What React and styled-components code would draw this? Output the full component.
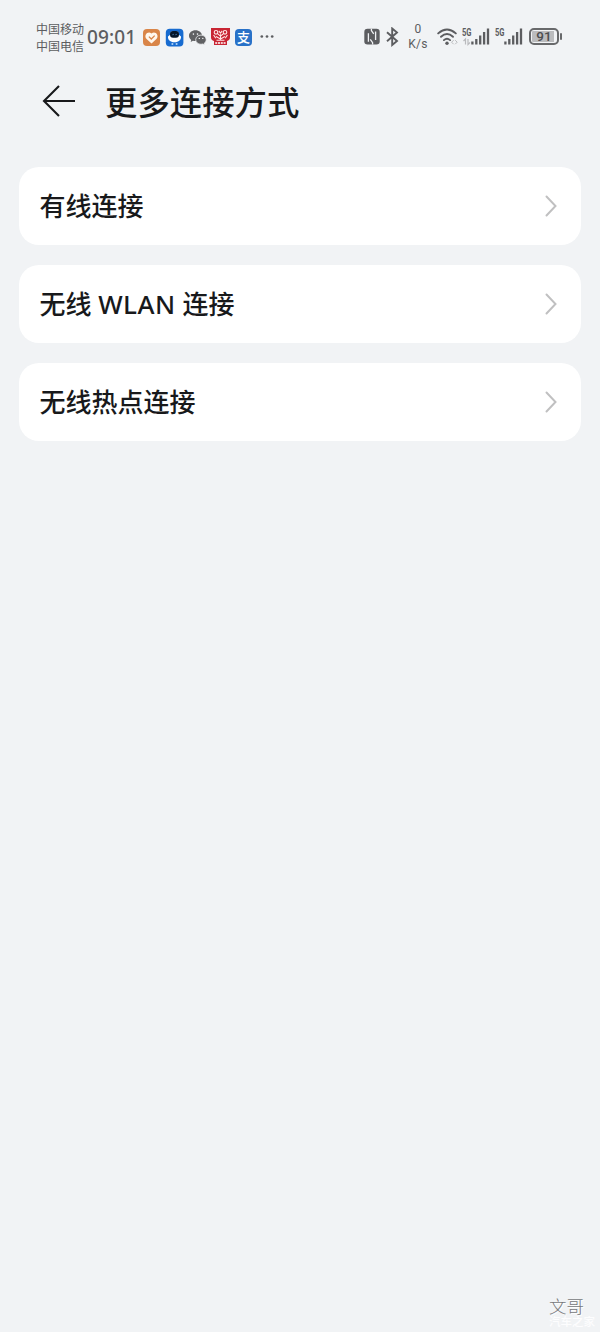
import styled, { createGlobalStyle } from "styled-components";

const GlobalStyle = createGlobalStyle`
    * {
        box-sizing: border-box;
    }

    body {
        margin: 0;
        background-color: #f1f3f5;
        font-family: "Noto Sans CJK SC", sans-serif;
        color: #18191b;
    }
`

const Page = styled.div`
    width: 100%;
    min-height: 1332px;
    display: flex;
    flex-direction: column;
`

const StatusBar = styled.div`
    height: 74px;
    padding: 0 38px 0 36px;
    display: flex;
    justify-content: space-between;
    align-items: center;
    color: #5c5d60;
`

const StatusGroup = styled.div`
    height: 36px;
    display: flex;
    align-items: center;
`

const Carriers = styled.div`
    width: 48px;
    margin-top: -1px;
    font-size: 12px;
    line-height: 17px;
    white-space: nowrap;
`

const Clock = styled.div`
    width: 49px;
    margin-left: 3px;
    font-family: "Noto Sans", sans-serif;
    font-size: 19px;
    font-weight: 500;
    line-height: 24px;
    letter-spacing: 0.1px;
`

const AppIcons = styled.div`
    margin-left: 6px;
    display: flex;
    align-items: center;
    gap: 4px;
`

const AppIcon = styled.svg`
    width: 19px;
    height: 19px;
    flex-shrink: 0;
`

const PayIcon = styled.div`
    width: 17px;
    height: 17px;
    margin: 0 1px;
    border-radius: 4px;
    background-color: #2871c8;
    color: white;
    font-size: 13px;
    font-weight: 500;
    line-height: 16px;
    text-align: center;
`

const Glyph = styled.svg`
    width: ${(props) => props.$w}px;
    height: 20px;
    margin-left: ${(props) => props.$gap || 0}px;
    flex-shrink: 0;
`

const NetSpeed = styled.div`
    width: 22px;
    margin-left: 8px;
    margin-right: 1px;
    font-family: "Roboto", sans-serif;
    font-size: 12px;
    line-height: 15px;
    letter-spacing: 0.3px;
    text-align: center;
    white-space: nowrap;
`

const NetType = styled.div`
    width: 9px;
    height: 20px;
    margin-left: ${(props) => props.$gap}px;
    font-family: "Roboto", sans-serif;
    font-size: 10px;
    font-weight: 700;
    line-height: 11px;
    white-space: nowrap;
    transform: scaleX(0.76);
    transform-origin: left;
`

const Battery = styled.div`
    position: relative;
    width: 30px;
    height: 17px;
    margin-left: 6px;
    margin-right: 3px;
    margin-top: -1px;
    padding: 1px;
    border: 2px solid #68696b;
    border-radius: 5px;

    &::after {
        content: "";
        position: absolute;
        right: -5px;
        top: 3px;
        width: 2px;
        height: 7px;
        border-radius: 1px;
        background-color: #68696b;
    }
`

const BatteryLevel = styled.div`
    height: 11px;
    border-radius: 1px;
    background: linear-gradient(to right, #bbbcbe 91%, transparent 91%);
    color: #4d4e50;
    font-family: "Roboto", sans-serif;
    font-size: 13.5px;
    font-weight: 500;
    line-height: 11px;
    text-align: center;
`

const Header = styled.header`
    height: 92px;
    padding: 5px 42px 0;
    display: flex;
    align-items: flex-start;
`

const BackArrow = styled.svg`
    width: 34px;
    height: 34px;
    margin-top: 5px;
    flex-shrink: 0;
`

const Title = styled.h1`
    margin: 0 0 0 29px;
    font-size: 32.4px;
    font-weight: 500;
    line-height: 44px;
`

const List = styled.main`
    padding: 0.6px 19.4px;
    display: flex;
    flex-direction: column;
    gap: 20px;
`

const Item = styled.div`
    height: 78px;
    padding: 0 23px 0 20px;
    display: flex;
    align-items: center;
    justify-content: space-between;
    border-radius: 20px;
    background-color: white;
`

const ItemLabel = styled.span`
    font-family: "Noto Sans", "Noto Sans CJK SC", sans-serif;
    font-size: 26px;
    font-weight: 500;
    line-height: 38px;
`

const Latin = styled.span`
    letter-spacing: 0.5px;
`

const Chevron = styled.svg`
    width: 14px;
    height: 24px;
`

const Signature = styled.footer`
    margin-top: auto;
    height: 38px;
    padding-right: 16px;
    display: flex;
    flex-direction: column;
    align-items: flex-end;
    font-size: 17.5px;
    font-weight: 300;
    line-height: 24px;
    color: #77787b;
    text-shadow: 1px 1px 0 white;
`

const SiteName = styled.span`
    margin-top: -5px;
    margin-right: -11px;
    color: #fdfdfe;
    font-size: 11.5px;
    font-weight: 500;
    line-height: 16px;
    text-shadow: none;
`

function HeartIcon() {
    return (
        <AppIcon viewBox="0 0 19 19">
            <rect x="1" y="1" width="17" height="17" rx="4" fill="#d98548" />
            <path d="M9.5 15.6 4.6 11C1.2 7.2 6 2.2 9.5 5.4c3.5-3.2 8.3 1.8 4.9 5.6Z" fill="#fff7ed" />
            <path d="m6.9 8.6 2.4 2.4 3.4-3.4" fill="none" stroke="#d98548" strokeWidth="1.3" />
        </AppIcon>
    );
}

function RobotIcon() {
    return (
        <AppIcon viewBox="0 0 19 19">
            <rect x="0.8" y="0.8" width="17.6" height="17.6" rx="4" fill="#176bd0" />
            <path d="M3 8.4C2.6 11.4 5.2 14.2 9.5 14.2s6.9-2.8 6.5-5.8L14.2 7 13 3.4H6L4.8 7Z" fill="white" />
            <rect x="5" y="3" width="9" height="6.8" rx="3" fill="#07172a" />
            <path d="M7.5 6.7q.6-1 1.2 0M10.5 6.7q.6-1 1.2 0" fill="none" stroke="#6aa7df" strokeWidth=".8" />
            <path d="M7.4 15.2v1.5M11.6 15.2v1.5" stroke="#d8edff" strokeWidth="1.7" />
        </AppIcon>
    );
}

function ChatIcon() {
    return (
        <AppIcon viewBox="0 0 19 19">
            <path d="M7.5 2.3C3.8 2.3 1 4.7 1 7.8c0 1.7.8 3.1 2.2 4.1l-.5 2 2.2-1.2c.8.3 1.7.4 2.6.4 3.6 0 6.5-2.4 6.5-5.3 0-3.1-2.9-5.5-6.5-5.5Z" fill="#606163" />
            <path d="M13 7.1c-3 0-5.3 2-5.3 4.6s2.3 4.6 5.3 4.6c.7 0 1.3-.1 1.9-.3l1.9 1-.5-1.7c1.1-.9 1.9-2.1 1.9-3.6 0-2.6-2.3-4.6-5.2-4.6Z" fill="#606163" stroke="#f1f3f5" strokeWidth=".8" />
            <g fill="#f1f3f5">
                <circle cx="5.4" cy="6.1" r=".8" />
                <circle cx="9.5" cy="6.1" r=".8" />
                <circle cx="11.3" cy="10.4" r=".7" />
                <circle cx="14.8" cy="10.4" r=".7" />
            </g>
        </AppIcon>
    );
}

function EmblemIcon() {
    return (
        <AppIcon viewBox="0 0 19 19">
            <path d="M0 0h19v9.6c0 2-1.2 3-3 3.4v4H3v-4c-1.8-.4-3-1.4-3-3.4Z" fill="#c82533" />
            <g fill="none" stroke="#ffe8e7" strokeWidth="1.1">
                <path d="M9.5 12.5V6.3M9.5 8.2 6.2 5.4M9.5 8.2l3.3-2.8M9.5 11 5 8.6M9.5 11l4.5-2.4M5.5 12.2h8" />
                <circle cx="5" cy="4.3" r="1.8" />
                <circle cx="14" cy="4.3" r="1.8" />
                <path d="M7.8 2.8 9.5 5l1.7-2.2M2.6 7l2.2 3.2M16.4 7l-2.2 3.2" />
            </g>
            <path d="M4.2 15h10.8" stroke="#fff" strokeWidth="1.5" strokeDasharray="2 .8" />
        </AppIcon>
    );
}

function DotsIcon() {
    return (
        <Glyph $w={14} $gap={3} viewBox="0 0 14 20" fill="#5c5d60">
            <circle cx="1.8" cy="9.5" r="1.35" />
            <circle cx="7" cy="9.5" r="1.35" />
            <circle cx="12.2" cy="9.5" r="1.35" />
        </Glyph>
    );
}

function NfcIcon() {
    return (
        <Glyph $w={16} viewBox="0 0 16 20">
            <rect x="0.3" y="1.8" width="15.4" height="15.6" rx="3.2" fill="#5c5d60" />
            <path d="M4.4 14.8V6.2M11.6 4.4V13M7.4 1.8v1.8l2.3 3.2M8.6 17.4v-1.8l-2.3-3.2" fill="none" stroke="#f1f3f5" strokeWidth="1.3" />
        </Glyph>
    );
}

function BluetoothIcon() {
    return (
        <Glyph $w={13} $gap={6} viewBox="0 0 13 20">
            <path d="m1 5.2 10 8.8-4.8 4V1.5l4.8 4L1 14.3" fill="none" stroke="#5c5d60" strokeWidth="1.9" />
        </Glyph>
    );
}

function WifiIcon() {
    return (
        <Glyph $w={21} $gap={7} viewBox="0 0 21 20">
            <g fill="none" stroke="#5c5d60" strokeWidth="1.9" strokeLinecap="round">
                <path d="M1.2 6.4Q10 -1.4 18.8 6.4" />
                <path d="M4 9.8q6-5.5 12 0" />
                <path d="M6.9 13.1q3.1-2.8 6.2 0" />
            </g>
            <circle cx="10" cy="16.2" r="1.7" fill="#5c5d60" />
            <path d="m16.6 13.2-2 2 2 2M18.2 13.2l2 2-2 2" fill="none" stroke="#b9babd" />
        </Glyph>
    );
}

function SignalIcon({ activity }) {
    return (
        <Glyph $w={activity ? 28 : 19} $gap={activity ? -9 : 0} viewBox={activity ? "-9 0 28 20" : "0 0 19 20"}>
            {activity && (
                <path d="M-5.5 17.5v-5.5l-2 2M-3 12v5.5l2-2" fill="none" stroke="#b9babd" strokeWidth="1.2" />
            )}
            <path d="M1.4 14.5v3M5.3 12v5.5M9.2 8.5v9M13.1 5v12.5M17 1.5v16" stroke="#5c5d60" strokeWidth="2.3" strokeLinecap="butt" />
        </Glyph>
    );
}

function ListItem({ children }) {
    return (
        <Item>
            <ItemLabel>{children}</ItemLabel>
            <Chevron viewBox="0 0 14 24">
                <path d="m2.5 2.5 9 9.5-9 9.5" fill="none" stroke="#c0c0c1" strokeWidth="2" strokeLinecap="round" />
            </Chevron>
        </Item>
    );
}

function App() {
    return (
        <Page>
            <GlobalStyle />
            <StatusBar>
                <StatusGroup>
                    <Carriers>
                        <div>中国移动</div>
                        <div>中国电信</div>
                    </Carriers>
                    <Clock>09:01</Clock>
                    <AppIcons>
                        <HeartIcon />
                        <RobotIcon />
                        <ChatIcon />
                        <EmblemIcon />
                        <PayIcon>支</PayIcon>
                        <DotsIcon />
                    </AppIcons>
                </StatusGroup>
                <StatusGroup>
                    <NfcIcon />
                    <BluetoothIcon />
                    <NetSpeed>
                        <div>0</div>
                        <div>K/s</div>
                    </NetSpeed>
                    <WifiIcon />
                    <NetType $gap={4}>5G</NetType>
                    <SignalIcon activity />
                    <NetType $gap={5}>5G</NetType>
                    <SignalIcon />
                    <Battery>
                        <BatteryLevel>91</BatteryLevel>
                    </Battery>
                </StatusGroup>
            </StatusBar>

            <Header>
                <BackArrow viewBox="0 0 34 34">
                    <path d="M33 17H2M17 2 2 17l15 15" fill="none" stroke="#18191b" strokeWidth="2.1" />
                </BackArrow>
                <Title>更多连接方式</Title>
            </Header>

            <List>
                <ListItem>有线连接</ListItem>
                <ListItem>无线 <Latin>WLAN</Latin> 连接</ListItem>
                <ListItem>无线热点连接</ListItem>
            </List>

            <Signature>
                文哥
                <SiteName>汽车之家</SiteName>
            </Signature>
        </Page>
    );
}


export default App;
